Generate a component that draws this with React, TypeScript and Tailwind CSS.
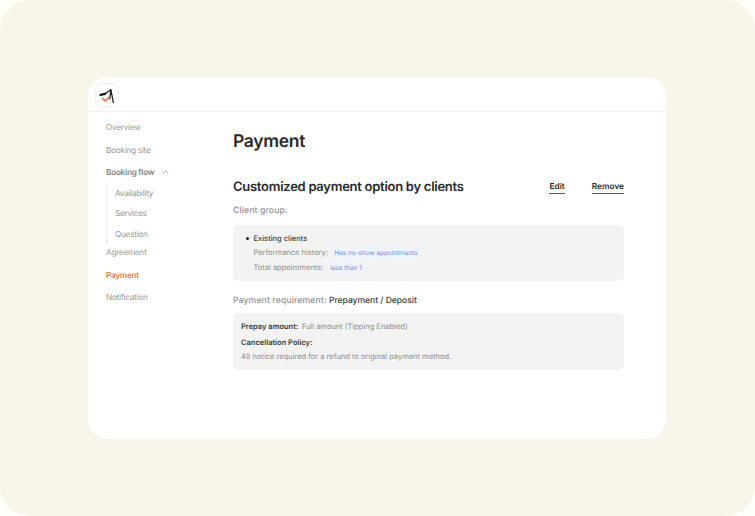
const subItems = ["Availability", "Services", "Question"];

const Logo = () => (
    <div className="flex h-[24px] w-[24px] items-center justify-center rounded-[7px] border border-[#f0f0f0] bg-white">
        <svg width="24" height="24" viewBox="0 0 24 24" fill="none" className="shrink-0">
            <path d="M5.5 11.8 L10 10.8" stroke="#1a1a1a" strokeWidth="2.4" strokeLinecap="round" />
            <path d="M10 10.8 L15.8 6.8 L18.4 19.4" stroke="#1a1a1a" strokeWidth="1.3" strokeLinecap="round" strokeLinejoin="round" />
            <path d="M15.8 6.8 L14.8 16" stroke="#1a1a1a" strokeWidth="1.2" strokeLinecap="round" />
            <path d="M7.6 15.4 L10.3 18 L13.6 14.4" stroke="#ee6c2f" strokeWidth="1.5" strokeLinecap="round" strokeLinejoin="round" />
        </svg>
    </div>
);

const Sidebar = () => (
    <nav className="w-[145px] shrink-0 pl-[18px] pt-[8px] text-[8.2px] leading-[14px] tracking-[-0.25px] text-[#999999]">
        <div className="flex flex-col gap-[8.5px]">
            <span>Overview</span>
            <span>Booking site</span>
            <span className="flex items-center gap-[8px] font-semibold text-[#858585]">
                Booking flow
                <svg width="7" height="4" viewBox="0 0 7 4" fill="none">
                    <path d="M0.7 3.4 L3.5 0.7 L6.3 3.4" stroke="#a0a0a0" strokeWidth="0.8" />
                </svg>
            </span>
        </div>
        <div className="mt-[4px] flex flex-col gap-[6.4px] border-l border-[#ececec] py-[3px] pl-[8px]">
            {subItems.map((item) => (
                <span key={item}>{item}</span>
            ))}
        </div>
        <div className="mt-[1.5px] flex flex-col gap-[8.5px]">
            <span>Agreement</span>
            <span className="font-semibold text-[#f07a3c]">Payment</span>
            <span>Notification</span>
        </div>
    </nav>
);

const Content = () => (
    <main className="w-[391px] pt-[17px]">
        <h1 className="text-[17.5px] font-semibold leading-[26px] tracking-[-0.3px] text-[#2a2a2a]">Payment</h1>
        <div className="mt-[22px] flex items-center justify-between">
            <h2 className="text-[13px] font-semibold leading-[20px] tracking-[-0.27px] text-[#2a2a2a]">
                Customized payment option by clients
            </h2>
            <div className="flex gap-[27px] text-[8.3px] font-semibold leading-[12px] text-[#2a2a2a]">
                <span className="border-b border-[#555555]">Edit</span>
                <span className="border-b border-[#555555]">Remove</span>
            </div>
        </div>
        <p className="mt-[7px] text-[8.7px] font-medium leading-[14px] tracking-[0.1px] text-[#8f8f8f]">Client group:</p>
        <div className="mt-[7px] h-[56px] rounded-[5px] bg-[#f3f3f3] pl-[13px] pt-[7.5px] text-[7.5px] leading-[12px]">
            <div className="flex items-center font-medium text-[#3a3a3a]">
                <span className="h-[2.5px] w-[2.5px] rounded-full bg-[#222222]" />
                <span className="ml-[5px]">Existing clients</span>
            </div>
            <div className="ml-[7.5px] mt-[2.5px] flex items-center text-[#8f8f8f]">
                <span>Performance history:</span>
                <span className="ml-[4.5px] rounded-[6px] bg-[#f0f4fd] px-[2px] text-[6.4px] text-[#6a8fec]">
                    Has no-show appointments
                </span>
            </div>
            <div className="ml-[7.5px] mt-[3px] flex items-center text-[#8f8f8f]">
                <span>Total appointments:</span>
                <span className="ml-[5px] rounded-[6px] bg-[#f0f4fd] px-[2px] text-[6.4px] text-[#6a8fec]">
                    less than 1
                </span>
            </div>
        </div>
        <p className="mt-[12.5px] text-[8.6px] font-medium leading-[14px] text-[#8f8f8f]">
            <span className="tracking-[0.15px]">Payment requirement:</span>{" "}
            <span className="tracking-[-0.05px] text-[#3a3a3a]">Prepayment / Deposit</span>
        </p>
        <div className="mt-[5.5px] h-[57px] rounded-[5px] bg-[#f3f3f3] pl-[8px] pt-[8px] text-[7.5px] leading-[12px] text-[#8f8f8f]">
            <p>
                <span className="mr-[1.5px] font-semibold text-[#3a3a3a]">Prepay amount:</span> Full amount (Tipping Enabled)
            </p>
            <p className="mt-[4px] font-semibold text-[#3a3a3a]">Cancellation Policy:</p>
            <p className="mt-[2px]">48 notice required for a refund to original payment method.</p>
        </div>
    </main>
);

export default function App() {
    return (
        <div className="bg-[#fffef9]">
            <div className="h-[516px] w-[755px] rounded-[30px] bg-[#f9f5ea] pl-[88px] pt-[77px] font-['Inter',sans-serif] [text-rendering:geometricPrecision]">
                <div className="h-[362px] w-[578px] rounded-[20px] bg-white">
                    <div className="h-[35px] border-b border-[#f2f2f2] pl-[7px] pt-[6px]">
                        <Logo />
                    </div>
                    <div className="flex">
                        <Sidebar />
                        <Content />
                    </div>
                </div>
            </div>
        </div>
    );
}
